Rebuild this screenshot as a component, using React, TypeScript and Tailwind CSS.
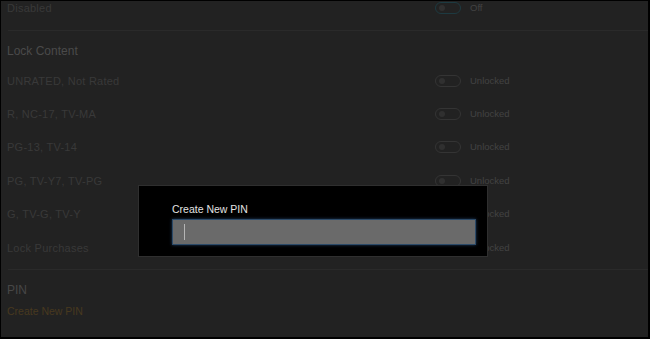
const ROWS = [
  "UNRATED, Not Rated",
  "R, NC-17, TV-MA",
  "PG-13, TV-14",
  "PG, TV-Y7, TV-PG",
  "G, TV-G, TV-Y",
  "Lock Purchases",
];

function Toggle({ teal = false }: { teal?: boolean }) {
  return (
    <div
      className={`flex h-[12px] w-[26px] items-center rounded-full border-[1.5px] pl-[3px] ${
        teal ? "border-[#1d3a41]" : "border-[#343434]"
      }`}
    >
      <div className="h-[6px] w-[6px] rounded-full bg-[#303030]" />
    </div>
  );
}

function Row({ label, state, teal, className }: { label: string; state: string; teal?: boolean; className: string }) {
  return (
    <div className={`flex items-center ${className}`}>
      <span className="w-[434px] pl-[6px] text-[11px] leading-[14px] tracking-[0.25px] text-[#393939]">{label}</span>
      <Toggle teal={teal} />
      <span className="pl-[9px] text-[9.5px] leading-[12px] text-[#424242]">{state}</span>
    </div>
  );
}

export default function App() {
  return (
    <div
      className="relative h-[339px] w-[650px] overflow-hidden border-t border-l border-r-2 border-b-2 border-black bg-[#222222]"
      style={{ fontFamily: '"Liberation Sans", Arial, sans-serif' }}
    >
      {/* Parental controls list */}
      <div className="flex flex-col">
        <Row label="Disabled" state="Off" teal className="h-[14px]" />
        <div className="h-[15px]" />
        <div className="ml-[7px] h-px bg-[#2a2a2a]" />
        <div className="h-[33px] pl-[6px] pt-[13px] text-[12px] leading-[14px] text-[#4a4a4a]">Lock Content</div>
        {ROWS.map((r) => (
          <Row key={r} label={r} state="Unlocked" className="h-[33.4px]" />
        ))}
        <div className="h-[4.6px]" />
        <div className="ml-[7px] h-px bg-[#2a2a2a]" />
        <div className="pl-[6px] pt-[13px] text-[12px] leading-[14px] text-[#474747]">PIN</div>
        <div className="mt-[8.5px] pl-[6px] text-[10.5px] leading-[13px] text-[#48391f]">Create New PIN</div>
      </div>

      {/* PIN dialog */}
      <div className="absolute left-[137px] top-[184px] h-[72px] w-[350px] border border-[#2f2f2f] bg-black pl-[33px] pt-[17px]">
        <div className="text-[10.5px] leading-[13px] text-[#e2e2e2]">Create New PIN</div>
        <div className="mt-[3px] flex h-[26px] w-[304px] items-center border border-[#2c4a68] bg-[#6a6a6a] pl-[11px] shadow-[0_0_3px_#1e3a5c]">
          <div className="h-[16px] w-px bg-[#b5b5b5]" />
        </div>
      </div>
    </div>
  );
}
